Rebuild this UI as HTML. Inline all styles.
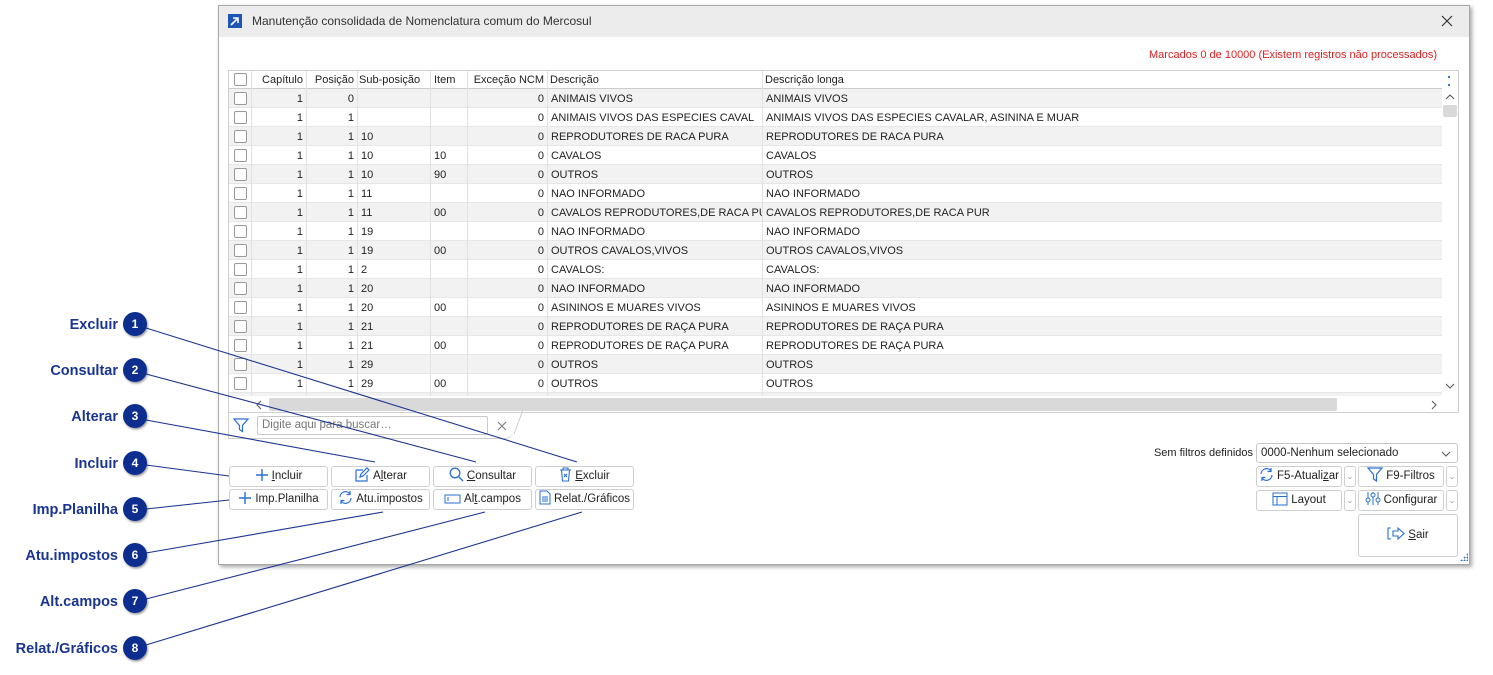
<!DOCTYPE html>
<html><head><meta charset="utf-8"><style>
*{box-sizing:border-box;margin:0;padding:0}
body{width:1493px;height:675px;background:#fff;position:relative;overflow:hidden;font-family:"Liberation Sans",sans-serif;font-size:11px;color:#222}
.a{position:absolute}
.win{left:218px;top:5px;width:1252px;height:560px;border:1px solid #a8a8a8;background:#fff;box-shadow:2px 2px 4px rgba(0,0,0,.35)}
.tb{left:0;top:0;width:1250px;height:31px;background:#ececec}
.grid{left:9px;top:64px;width:1231px;height:343px;border:1px solid #cfcfcf;overflow:hidden}
.row{position:absolute;left:0;width:1213px;height:19px;border-bottom:1px solid #e6e6e6}
.row.g{background:#f2f2f2}
.c{position:absolute;top:0;height:19px;line-height:20px;border-right:1px solid #e2e2e2;white-space:nowrap;overflow:hidden;padding:0 3px}
.r{text-align:right}
.cb{position:absolute;left:5px;top:3px;width:13px;height:13px;border:1px solid #999;border-radius:2px;background:#fff}
.btn{position:absolute;height:21px;border:1px solid #cfcfcf;border-radius:3px;background:#fff;line-height:19px;text-align:center;font-size:11.5px;color:#222;white-space:nowrap}
.btn svg{vertical-align:-3px;margin-right:3px}
.lbl{position:absolute;right:1375px;font-weight:bold;font-size:14.5px;color:#1a3591;white-space:nowrap}
</style></head><body>
<div class="a win">
 <div class="a tb">
  <div class="a" style="left:9px;top:8px;width:14px;height:14px;background:#1d56b5"><svg width="14" height="14"><path d="M3 11L10 4M5 4h5v5" stroke="#fff" stroke-width="1.6" fill="none"/></svg></div>
  <div class="a" style="left:33px;top:8px;font-size:12px;color:#333">Manutenção consolidada de Nomenclatura comum do Mercosul</div>
  <svg class="a" style="left:1222px;top:9px" width="12" height="12"><path d="M1 1L11 11M11 1L1 11" stroke="#333" stroke-width="1.2"/></svg>
 </div>
 <div class="a" style="right:32px;top:43px;color:#e02020;font-size:11px">Marcados 0 de 10000 (Existem registros não processados)</div>
 <div class="a grid" id="g">
  <div class="row" style="top:0;height:18px;background:#fff;border-bottom:1px solid #ccc">
   <div class="c" style="left:0;width:23px"><div class="cb" style="top:2px"></div></div>
   <div class="c r" style="left:23px;width:55px;line-height:18px">Capítulo</div>
   <div class="c r" style="left:78px;width:51px;line-height:18px">Posição</div>
   <div class="c" style="left:129px;width:73px;line-height:18px;padding-left:1px">Sub-posição</div>
   <div class="c" style="left:202px;width:37px;line-height:18px">Item</div>
   <div class="c r" style="left:239px;width:80px;line-height:18px">Exceção NCM</div>
   <div class="c" style="left:319px;width:215px;line-height:18px;padding-left:2px">Descrição</div>
   <div class="c" style="left:534px;width:680px;line-height:18px;padding-left:2px">Descrição longa</div>
  </div>
  <div class="a" style="left:1213px;top:0;width:16px;height:325px;background:#fff">
   <div class="a" style="left:6px;top:5px;width:2px;height:10px;border-top:2px dotted #3a6fd0;border-bottom:2px dotted #3a6fd0"></div>
   <svg class="a" style="left:3px;top:23px" width="10" height="6"><path d="M1 5L5 1L9 5" stroke="#555" fill="none"/></svg>
   <div class="a" style="left:1px;top:34px;width:14px;height:12px;background:#d9d9d9;border-radius:2px"></div>
   <svg class="a" style="left:3px;top:312px" width="10" height="6"><path d="M1 1L5 5L9 1" stroke="#555" fill="none"/></svg>
  </div>
  <div class="a" style="left:0;top:325px;width:1229px;height:17px;background:#fff">
   <svg class="a" style="left:27px;top:4px" width="6" height="10"><path d="M5 1L1 5L5 9" stroke="#555" fill="none"/></svg>
   <div class="a" style="left:40px;top:2px;width:1068px;height:13px;background:#d9d9d9;border-radius:2px"></div>
   <svg class="a" style="left:1202px;top:4px" width="6" height="10"><path d="M1 1L5 5L1 9" stroke="#555" fill="none"/></svg>
  </div>
 </div>
 <div class="a" style="left:9px;top:407px;width:285px;height:26px;border:1px solid #cfcfcf;border-top:none;border-right:none;border-radius:0 0 8px 0;background:#fff"></div>
 <svg class="a" style="left:14px;top:411px" width="16" height="16"><path d="M1 2h14l-5.5 6.5v6l-3-2v-4z" stroke="#2a6fd6" stroke-width="1.2" fill="none"/></svg>
 <div class="a" style="left:38px;top:410px;width:231px;height:19px;border:1px solid #c8c8c8;border-radius:2px;color:#777;padding:2px 4px;font-size:11.5px">Digite aqui para buscar…</div>
 <svg class="a" style="left:278px;top:415px" width="10" height="10"><path d="M1 1L9 9M9 1L1 9" stroke="#777"/></svg>
 <svg class="a" style="left:290px;top:404px" width="16" height="30"><path d="M14 0L5 24" stroke="#ccc"/></svg>

 <div class="btn" style="left:10px;top:460px;width:99px"><svg width="14" height="14"><path d="M7 1v12M1 7h12" stroke="#2a6fd6" stroke-width="1.4"/></svg><u>I</u>ncluir</div>
 <div class="btn" style="left:112px;top:460px;width:99px"><svg width="16" height="15"><path d="M2 3h7M2 3v11h11V8M6 10l1-3 6-6 2 2-6 6z" stroke="#2a6fd6" stroke-width="1.2" fill="none"/></svg>A<u>l</u>terar</div>
 <div class="btn" style="left:214px;top:460px;width:99px"><svg width="15" height="15"><circle cx="6" cy="6" r="4.8" stroke="#2a6fd6" stroke-width="1.3" fill="none"/><path d="M9.5 9.5L14 14" stroke="#2a6fd6" stroke-width="1.4"/></svg><u>C</u>onsultar</div>
 <div class="btn" style="left:316px;top:460px;width:99px"><svg width="13" height="15"><path d="M1 3h11M4 3V1h5v2M2.5 3l1 11h6l1-11M5 7l3 3M8 7l-3 3" stroke="#2a6fd6" stroke-width="1.1" fill="none"/></svg><u>E</u>xcluir</div>
 <div class="btn" style="left:10px;top:483px;width:99px"><svg width="14" height="14"><path d="M7 1v12M1 7h12" stroke="#2a6fd6" stroke-width="1.4"/></svg>Imp.Planilha</div>
 <div class="btn" style="left:112px;top:483px;width:99px"><svg width="15" height="15"><path d="M2 7a5.5 5.5 0 0 1 10-3M13 8a5.5 5.5 0 0 1-10 3M12 1v3.5H8.5M3 14v-3.5h3.5" stroke="#2a6fd6" stroke-width="1.2" fill="none"/></svg>Atu.impostos</div>
 <div class="btn" style="left:214px;top:483px;width:99px"><svg width="17" height="12"><rect x="1" y="2" width="15" height="8" stroke="#2a6fd6" fill="none"/><path d="M4 4v4" stroke="#2a6fd6"/></svg>Al<u>t</u>.campos</div>
 <div class="btn" style="left:316px;top:483px;width:99px"><svg width="12" height="15"><path d="M1 1h7l3 3v10H1zM3 7h6M3 9h6M3 11h6" stroke="#2a6fd6" fill="none"/></svg>Relat./Gráficos</div>

 <div class="a" style="right:216px;top:441px;font-size:11px">Sem filtros definidos</div>
 <div class="a" style="left:1037px;top:437px;width:202px;height:20px;border:1px solid #c8c8c8;border-radius:3px;padding:3px 4px;font-size:11.5px">0000-Nenhum selecionado<svg class="a" style="right:6px;top:7px" width="10" height="6"><path d="M1 1L5 5L9 1" stroke="#555" fill="none"/></svg></div>
 <div class="btn" style="left:1037px;top:460px;width:86px"><svg width="15" height="15"><path d="M2 7a5.5 5.5 0 0 1 10-3M13 8a5.5 5.5 0 0 1-10 3M12 1v3.5H8.5M3 14v-3.5h3.5" stroke="#2a6fd6" stroke-width="1.2" fill="none"/></svg>F5-Atuali<u>z</u>ar</div>
 <div class="btn" style="left:1125px;top:460px;width:12px;color:#99a;font-size:8px">⌄</div>
 <div class="btn" style="left:1139px;top:460px;width:86px"><svg width="16" height="15"><path d="M1 1h14l-5.5 6.5v6.5l-3-2V7.5z" stroke="#2a6fd6" stroke-width="1.2" fill="none"/></svg>F9-Filtros</div>
 <div class="btn" style="left:1227px;top:460px;width:12px;color:#99a;font-size:8px">⌄</div>
 <div class="btn" style="left:1037px;top:484px;width:86px"><svg width="16" height="14"><rect x="1" y="1" width="14" height="12" stroke="#2a6fd6" fill="none"/><path d="M1 4.5h14M5 4.5V13" stroke="#2a6fd6"/></svg>Layout</div>
 <div class="btn" style="left:1125px;top:484px;width:12px;color:#99a;font-size:8px">⌄</div>
 <div class="btn" style="left:1139px;top:484px;width:86px"><svg width="16" height="15"><path d="M3 1v13M8 1v13M13 1v13" stroke="#2a6fd6"/><circle cx="3" cy="9" r="2" fill="#fff" stroke="#2a6fd6"/><circle cx="8" cy="4" r="2" fill="#fff" stroke="#2a6fd6"/><circle cx="13" cy="9" r="2" fill="#fff" stroke="#2a6fd6"/></svg>Configurar</div>
 <div class="btn" style="left:1227px;top:484px;width:12px;color:#99a;font-size:8px">⌄</div>
 <div class="btn" style="left:1139px;top:508px;width:100px;height:43px;line-height:41px"><svg width="18" height="15"><path d="M4 2H1v11h3M6 5h5V2l6 5.5-6 5.5V10H6z" stroke="#2a6fd6" stroke-width="1.1" fill="none"/></svg><u>S</u>air</div>
 <div class="a" style="left:1241px;top:547px;width:8px;height:8px;background:radial-gradient(circle,#3a6fd0 0.8px,transparent 1px) 0 0/3px 3px;clip-path:polygon(100% 0,100% 100%,0 100%)"></div>
</div>

<div class="lbl" style="top:317px">Excluir</div>
<div class="lbl" style="top:363px">Consultar</div>
<div class="lbl" style="top:409px">Alterar</div>
<div class="lbl" style="top:456px">Incluir</div>
<div class="lbl" style="top:502px">Imp.Planilha</div>
<div class="lbl" style="top:548px">Atu.impostos</div>
<div class="lbl" style="top:594px">Alt.campos</div>
<div class="lbl" style="top:641px">Relat./Gráficos</div>

<svg class="a" style="left:0;top:0" width="1493" height="675">
 <defs><filter id="s"><feDropShadow dx="1" dy="1.5" stdDeviation="1" flood-opacity=".4"/></filter></defs>
 <g stroke="#1a3591" stroke-width="1.1">
  <line x1="146" y1="328" x2="577" y2="462"/>
  <line x1="146" y1="374" x2="476" y2="462"/>
  <line x1="146" y1="420" x2="375" y2="462"/>
  <line x1="146" y1="465" x2="229" y2="476"/>
  <line x1="146" y1="509" x2="229" y2="500"/>
  <line x1="146" y1="553" x2="383" y2="512"/>
  <line x1="146" y1="599" x2="485" y2="512"/>
  <line x1="146" y1="645" x2="582" y2="512"/>
 </g>
 <g fill="#0b2d8e" filter="url(#s)">
  <circle cx="135" cy="324" r="12"/><circle cx="135" cy="370" r="12"/><circle cx="135" cy="416" r="12"/><circle cx="135" cy="463" r="12"/>
  <circle cx="135" cy="509" r="12"/><circle cx="135" cy="555" r="12"/><circle cx="135" cy="601" r="12"/><circle cx="135" cy="648" r="12"/>
 </g>
 <g fill="#fff" font-family="Liberation Sans" font-weight="bold" font-size="12" text-anchor="middle">
  <text x="135" y="328">1</text><text x="135" y="374">2</text><text x="135" y="420">3</text><text x="135" y="467">4</text>
  <text x="135" y="513">5</text><text x="135" y="559">6</text><text x="135" y="605">7</text><text x="135" y="652">8</text>
 </g>
</svg>

<script>
var d=[["1","0","","","ANIMAIS VIVOS","ANIMAIS VIVOS"],["1","1","","","ANIMAIS VIVOS DAS ESPECIES CAVAL","ANIMAIS VIVOS DAS ESPECIES CAVALAR, ASININA E MUAR"],["1","1","10","","REPRODUTORES DE RACA PURA","REPRODUTORES DE RACA PURA"],["1","1","10","10","CAVALOS","CAVALOS"],["1","1","10","90","OUTROS","OUTROS"],["1","1","11","","NAO INFORMADO","NAO INFORMADO"],["1","1","11","00","CAVALOS REPRODUTORES,DE RACA PUR","CAVALOS REPRODUTORES,DE RACA PUR"],["1","1","19","","NAO INFORMADO","NAO INFORMADO"],["1","1","19","00","OUTROS CAVALOS,VIVOS","OUTROS CAVALOS,VIVOS"],["1","1","2","","CAVALOS:","CAVALOS:"],["1","1","20","","NAO INFORMADO","NAO INFORMADO"],["1","1","20","00","ASININOS E MUARES VIVOS","ASININOS E MUARES VIVOS"],["1","1","21","","REPRODUTORES DE RAÇA PURA","REPRODUTORES DE RAÇA PURA"],["1","1","21","00","REPRODUTORES DE RAÇA PURA","REPRODUTORES DE RAÇA PURA"],["1","1","29","","OUTROS","OUTROS"],["1","1","29","00","OUTROS","OUTROS"],["1","1","3","","",""]];
var h="";d.forEach(function(r,i){h+='<div class="row'+(i%2==0?' g':'')+'" style="top:'+(18+i*19)+'px"><div class="c" style="left:0;width:23px"><div class="cb"></div></div><div class="c r" style="left:23px;width:55px">'+r[0]+'</div><div class="c r" style="left:78px;width:51px">'+r[1]+'</div><div class="c" style="left:129px;width:73px">'+r[2]+'</div><div class="c" style="left:202px;width:37px">'+r[3]+'</div><div class="c r" style="left:239px;width:80px">0</div><div class="c" style="left:319px;width:215px">'+r[4]+'</div><div class="c" style="left:534px;width:680px">'+r[5]+'</div></div>';});
document.getElementById("g").insertAdjacentHTML("afterbegin",h);
</script>
</body></html>
